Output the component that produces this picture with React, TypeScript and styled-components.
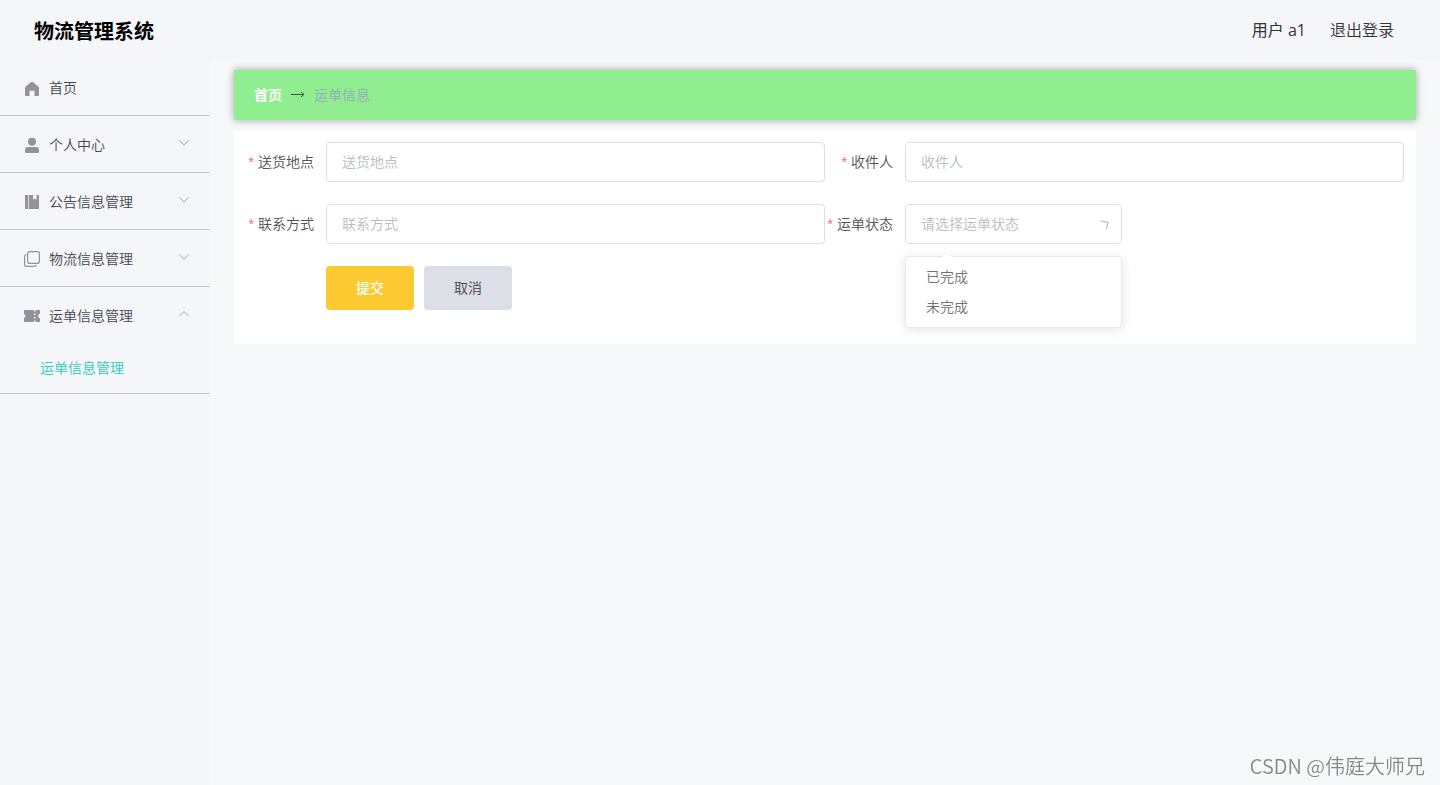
import React, { useState } from "react";
import styled, { createGlobalStyle } from "styled-components";

const GlobalStyle = createGlobalStyle`
  *, *::before, *::after { box-sizing: border-box; }
  html, body { margin: 0; padding: 0; }
  body {
    background: #f7f8fa;
    color: #606266;
    font-family: "Open Sans", "Noto Sans CJK SC", sans-serif;
    font-size: 14px;
    font-weight: 350;
    line-height: 20px;
  }
  button, input, select { font: inherit; }
`;

const Page = styled.div`
  display: flex;
  flex-direction: column;
  min-height: 100vh;
`;

const Header = styled.header`
  display: flex;
  align-items: center;
  justify-content: space-between;
  height: 60px;
  padding: 0 46px 0 34px;
  background: #f4f6fa;
`;

const Title = styled.h1`
  margin: 0;
  padding-top: 4px;
  font-size: 20px;
  line-height: 28px;
  font-weight: 700;
  color: #000;
`;

const UserArea = styled.div`
  display: flex;
  gap: 24px;
  font-size: 16px;
  line-height: 24px;
  color: #333;
`;

const UserName = styled.span`
  font-weight: 400;
`;

const LogoutButton = styled.button`
  padding: 0;
  border: 0;
  background: none;
  color: inherit;
  cursor: pointer;
`;

const Body = styled.div`
  display: flex;
  flex: 1;
`;

const Sidebar = styled.nav`
  flex: 0 0 210px;
  background: #f4f6fa;
`;

const Menu = styled.ul`
  margin: -1px 0 0;
  padding: 0;
  list-style: none;
`;

const MenuGroup = styled.li`
  border-bottom: 1px solid #c8cacc;
`;

const MenuButton = styled.button`
  display: flex;
  align-items: center;
  gap: 9px;
  width: 100%;
  height: 56px;
  padding: 2px 20px 0 24px;
  border: 0;
  background: none;
  color: #43464c;
  text-align: left;
  cursor: pointer;

  svg { flex: none; }
`;

const MenuText = styled.span`
  flex: 1;
`;

const SubLink = styled.a`
  display: flex;
  align-items: center;
  height: 50px;
  padding: 0 40px;
  color: #30c9bb;
  text-decoration: none;
`;

const Main = styled.main`
  flex: 1;
  min-width: 0;
  padding: 10px 24px;
  display: flex;
  flex-direction: column;
  gap: 10px;
`;

const Breadcrumb = styled.nav`
  display: flex;
  align-items: center;
  gap: 9px;
  height: 50px;
  padding: 0 20px;
  background: #90ee90;
  box-shadow: 0 0 8px rgba(0, 0, 0, 0.35);
  color: #97a8be;
`;

const HomeLink = styled.a`
  color: #fff;
  font-weight: 700;
  text-decoration: none;
`;

const FormCard = styled.form`
  display: grid;
  grid-template-columns: 1fr 1fr;
  row-gap: 22px;
  padding: 12px 12px 34px;
  background: #fff;
`;

const Field = styled.div`
  display: flex;
  align-items: center;
`;

const Label = styled.label`
  flex: 0 0 80px;
  display: flex;
  justify-content: flex-end;
  gap: 4px;
  padding-right: 12px;
  color: #505256;
  white-space: nowrap;
`;

const Required = styled.span`
  font-family: "Liberation Sans", sans-serif;
  color: #f56c6c;
`;

const TextInput = styled.input`
  flex: 1;
  min-width: 0;
  height: 40px;
  padding: 0 15px 2px;
  border: 1px solid #dcdfe6;
  border-radius: 4px;
  background: #fff;
  color: #606266;
  outline: none;

  &::placeholder { color: #b8bcc5; opacity: 1; }
`;

const SelectBox = styled.div`
  position: relative;
  width: 217px;
`;

const StatusSelect = styled.select<{ $empty: boolean }>`
  display: block;
  width: 100%;
  height: 40px;
  padding: 0 30px 0 15px;
  border: 1px solid #dcdfe6;
  border-radius: 4px;
  appearance: none;
  background: #fff;
  color: ${(p) => (p.$empty ? "#b8bcc5" : "#606266")};
  outline: none;
`;

const SelectArrow = styled.svg`
  position: absolute;
  top: 13px;
  right: 10px;
  pointer-events: none;
`;

const Dropdown = styled.div`
  position: absolute;
  top: 52px;
  left: 0;
  width: 100%;
  padding: 5px 0;
  border: 1px solid #e4e7ed;
  border-radius: 4px;
  background: #fff;
  box-shadow: 0 2px 12px rgba(0, 0, 0, 0.1);
`;

const DropdownTip = styled.svg`
  position: absolute;
  top: -5px;
  left: 35px;
`;

const Option = styled.button`
  display: block;
  width: 100%;
  height: 30px;
  padding: 0 20px;
  border: 0;
  background: none;
  color: #707276;
  text-align: left;
  cursor: pointer;
`;

const Actions = styled.div`
  display: flex;
  gap: 10px;
  padding-left: 80px;
`;

const ActionButton = styled.button<{ $primary?: boolean }>`
  width: 88px;
  height: 44px;
  border: 0;
  border-radius: 4px;
  background: ${(p) => (p.$primary ? "#fcc931" : "#dcdfe6")};
  color: ${(p) => (p.$primary ? "#fff" : "#444")};
  font-weight: ${(p) => (p.$primary ? 500 : 350)};
  cursor: pointer;
`;

const Watermark = styled.div`
  position: fixed;
  right: 15px;
  bottom: 5px;
  font-family: "Noto Sans CJK SC", sans-serif;
  font-size: 20px;
  line-height: 28px;
  color: #85878a;
  text-shadow: 1px 1px 1px #fff;
`;

const icons: Record<string, React.ReactNode> = {
  home: (
    <path
      fill="currentColor"
      d="M7.2 2a1.300 1.300 0 0 1 1.600 0l5.500 4.600c.5.4.7.8.7 1.400V15a1 1 0 0 1-1 1h-3.500v-4.500a.8.8 0 0 0-.8-.8H6.300a.8.8 0 0 0-.8.8V16H2a1 1 0 0 1-1-1V8c0-.6.2-1 .7-1.400z"
    />
  ),
  user: (
    <g fill="currentColor">
      <circle cx="8" cy="4.800" r="4" />
      <path d="M4 10h8a3 3 0 0 1 3 3v2a1 1 0 0 1-1 1H2a1 1 0 0 1-1-1v-2a3 3 0 0 1 3-3z" />
    </g>
  ),
  book: (
    <g fill="currentColor">
      <path d="M1 1h3v14H1z" />
      <path d="M4.700 1H9v4.700l1.800-1.100 1.800 1.100V1H15v14H4.700z" />
    </g>
  ),
  copy: (
    <g fill="none" stroke="currentColor" strokeWidth="1.200">
      <rect x="3.600" y="0.600" width="11.800" height="11.800" rx="2.200" />
      <path d="M2.400 3.500C1.200 3.700.6 4.500.6 5.600v7.600c0 1.400.8 2.200 2.200 2.200h7.600c1 0 1.800-.5 2.100-1.500" />
    </g>
  ),
  ticket: (
    <path
      fill="currentColor"
      fillRule="evenodd"
      d="M0 2h10v1.500h1.500V2H16v3.600a2.500 2.500 0 0 0 0 4.800V14h-4.500v-1.500H10V14H0v-3.600l1.500-2.400L0 5.600zM10 5.500v1.500h1.500V5.500zM10 9v1.500h1.500V9z"
    />
  ),
};

const Glyph = ({ name }: { name: string }) => (
  <svg width="16" height="16" viewBox="0 0 16 16" color="#909399" aria-hidden="true">
    {icons[name]}
  </svg>
);

const Chevron = ({ open }: { open: boolean }) => (
  <svg width="12" height="16" viewBox="0 0 12 16" aria-hidden="true">
    <path
      d={open ? "M1.500 8L6 3.500 10.500 8" : "M1.500 3.500L6 8l4.500-4.500"}
      fill="none"
      stroke="#a0a4ac"
    />
  </svg>
);

const menu = [
  { icon: "home", text: "首页" },
  { icon: "user", text: "个人中心", expandable: true },
  { icon: "book", text: "公告信息管理", expandable: true },
  { icon: "copy", text: "物流信息管理", expandable: true },
  { icon: "ticket", text: "运单信息管理", expandable: true, children: ["运单信息管理"] },
];

const statuses = ["已完成", "未完成"];

const FormField = ({ id, label, children }: { id: string; label: string; children: React.ReactNode }) => (
  <Field>
    <Label htmlFor={id}>
      <Required>*</Required>
      {label}
    </Label>
    {children}
  </Field>
);

export default function App() {
  const [status, setStatus] = useState("");

  return (
    <Page>
      <GlobalStyle />
      <Header>
        <Title>物流管理系统</Title>
        <UserArea>
          <UserName>用户 a1</UserName>
          <LogoutButton type="button">退出登录</LogoutButton>
        </UserArea>
      </Header>
      <Body>
        <Sidebar>
          <Menu>
            {menu.map((item) => (
              <MenuGroup key={item.text}>
                <MenuButton type="button">
                  <Glyph name={item.icon} />
                  <MenuText>{item.text}</MenuText>
                  {item.expandable && <Chevron open={!!item.children} />}
                </MenuButton>
                {item.children?.map((child) => (
                  <SubLink key={child} href="#waybill">{child}</SubLink>
                ))}
              </MenuGroup>
            ))}
          </Menu>
        </Sidebar>
        <Main>
          <Breadcrumb>
            <HomeLink href="#home">首页</HomeLink>
            <svg width="14" height="14" viewBox="0 0 14 14" aria-hidden="true">
              <path d="M0 6.500h13M10 4l3 2.500L10 9" fill="none" stroke="#444a4a" />
            </svg>
            <span>运单信息</span>
          </Breadcrumb>
          <FormCard onSubmit={(e) => e.preventDefault()}>
            <FormField id="place" label="送货地点">
              <TextInput id="place" placeholder="送货地点" />
            </FormField>
            <FormField id="receiver" label="收件人">
              <TextInput id="receiver" placeholder="收件人" />
            </FormField>
            <FormField id="contact" label="联系方式">
              <TextInput id="contact" placeholder="联系方式" />
            </FormField>
            <FormField id="status" label="运单状态">
              <SelectBox>
                <StatusSelect
                  id="status"
                  $empty={!status}
                  value={status}
                  onChange={(e) => setStatus(e.target.value)}
                >
                  <option value="">请选择运单状态</option>
                  {statuses.map((s) => (
                    <option key={s}>{s}</option>
                  ))}
                </StatusSelect>
                <SelectArrow width="14" height="14" viewBox="0 0 14 14" aria-hidden="true">
                  <path d="M2.500 4L10 5.300 8.500 12" fill="none" stroke="#c0c4cc" strokeWidth="1.400" />
                </SelectArrow>
                <Dropdown>
                  <DropdownTip width="12" height="6" viewBox="0 0 12 6" aria-hidden="true">
                    <path d="M0 6l6-6 6 6z" fill="#fff" />
                    <path d="M0 5.500L6 0l6 5.500" fill="none" stroke="#f1f3f6" />
                  </DropdownTip>
                  {statuses.map((s) => (
                    <Option key={s} type="button" onClick={() => setStatus(s)}>{s}</Option>
                  ))}
                </Dropdown>
              </SelectBox>
            </FormField>
            <Actions>
              <ActionButton type="submit" $primary>提交</ActionButton>
              <ActionButton type="button">取消</ActionButton>
            </Actions>
          </FormCard>
        </Main>
      </Body>
      <Watermark>CSDN @伟庭大师兄</Watermark>
    </Page>
  );
}
